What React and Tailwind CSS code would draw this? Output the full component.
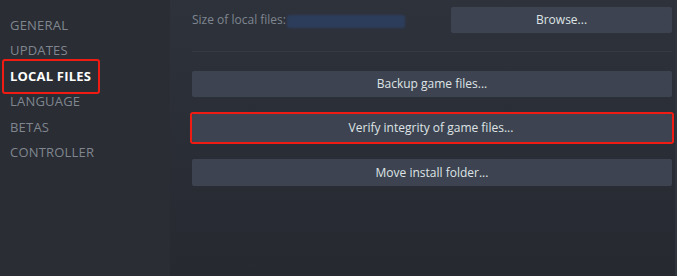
const SECTIONS = ['GENERAL', 'UPDATES', 'LOCAL FILES', 'LANGUAGE', 'BETAS', 'CONTROLLER']

const btnCls = 'h-[26px] rounded-[2px] bg-[#3d4350] text-[#dfe3e6] text-[12px] flex items-center justify-center'

function Highlight() {
  return <span className="absolute -inset-y-[2px] -inset-x-[2px] border-[2.5px] border-[#f01c14] rounded-[3px] pointer-events-none" />
}

export default function App() {
  return (
    <div
      className="w-[677px] h-[276px] flex overflow-hidden bg-[#2b2e35]"
      style={{ fontFamily: '"Open Sans", "Liberation Sans", sans-serif' }}
    >
      <aside className="w-[170px] shrink-0 bg-[#2a2d34] pt-[13px]">
        {SECTIONS.map(s => (
          <div key={s} className="h-[25.4px] flex items-center pl-[10px]">
            {s === 'LOCAL FILES' ? (
              <span className="relative text-[13px] font-bold text-white tracking-[0.2px]">
                {s}
                <span className="absolute top-[-8px] bottom-[-8px] left-[-8px] right-[-9px] border-[2.5px] border-[#f01c14] rounded-[3px]" />
              </span>
            ) : (
              <span className="text-[13px] text-[#80868f] tracking-[0.2px]">{s}</span>
            )}
          </div>
        ))}
      </aside>

      <main className="flex-1 pl-[22px] pr-[3px] pt-[7px] bg-gradient-to-b from-[#2e323b] to-[#262930] border-r-[2px] border-[#30343c]">
        <div className="flex items-center h-[26px]">
          <span className="text-[12px] text-[#7f8690] whitespace-nowrap shrink-0">Size of local files:</span>
          <span className="ml-[1px] mt-[3px] w-[118px] h-[13px] shrink-0 bg-[#2c3d5c] blur-[1px] rounded-[2px]" />
          <div className="flex-1" />
          <button className={`${btnCls} w-[221px] shrink-0`}>Browse...</button>
        </div>

        <div className="mt-[18px] h-px bg-[#363a43]" />

        <div className="mt-[19px] flex flex-col">
          <button className={`${btnCls} w-full`}>Backup game files...</button>
          <div className="relative mt-[17px] w-full">
            <button className={`${btnCls} w-full h-[28px] pr-[2px]`}>Verify integrity of game files...</button>
            <Highlight />
          </div>
          <button className={`${btnCls} w-full mt-[17px] h-[27px]`}>Move install folder...</button>
        </div>
      </main>
    </div>
  )
}
